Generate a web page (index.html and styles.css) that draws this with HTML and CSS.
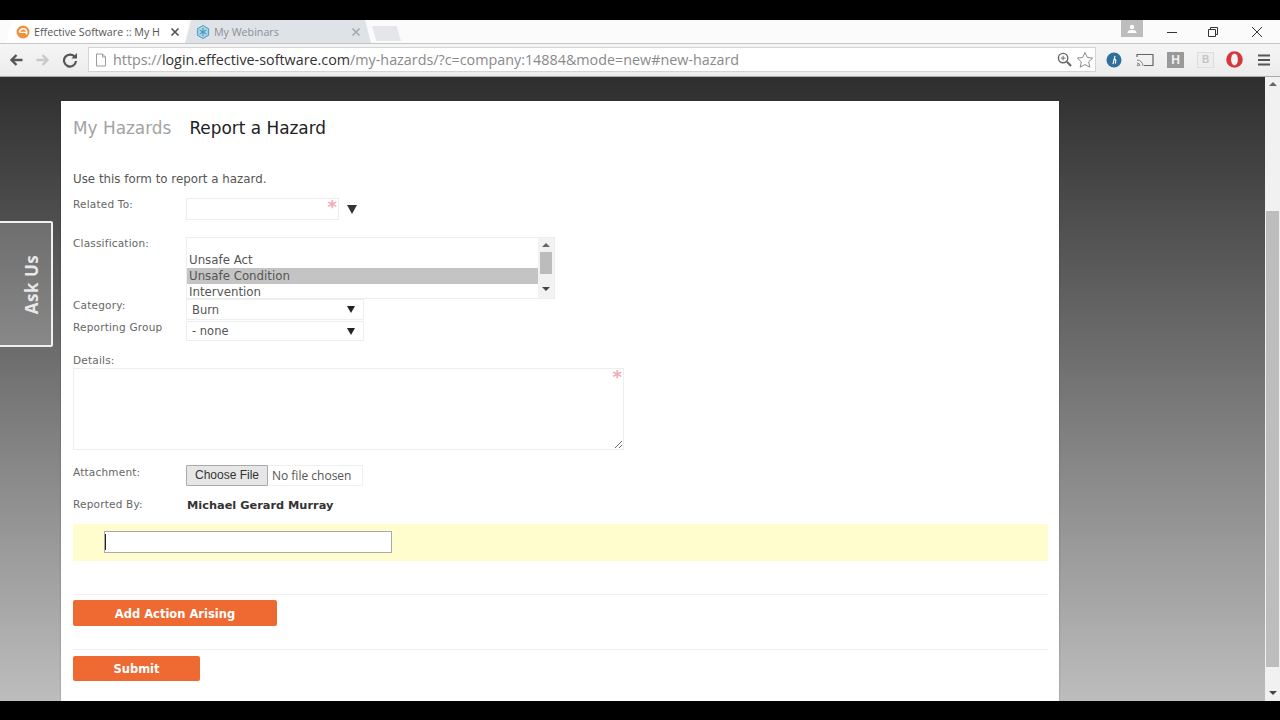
FILE: index.html
```html
<!DOCTYPE html>
<html lang="en">
<head>
<meta charset="utf-8">
<title>Effective Software :: My Hazards</title>
<link rel="stylesheet" href="styles.css">
</head>
<body>
<div class="letterbox-top"></div>
<div class="chrome-tabs">
  <div class="tab tab-active">
    <svg class="favicon" viewBox="0 0 14 14"><circle cx="7" cy="7" r="6.5" fill="#f0913a"/><path d="M3.5 7.5a3.6 3.6 0 1 1 6.6 1.8" fill="none" stroke="#fff" stroke-width="1.6"/><path d="M4 7.4h6" stroke="#fff" stroke-width="1.3"/></svg>
    <span class="tab-title">Effective Software :: My H</span>
    <svg class="tab-close" viewBox="0 0 10 10"><path d="M1.5 1.5l7 7M8.5 1.5l-7 7" stroke="#555" stroke-width="1.7"/></svg>
  </div>
  <div class="tab tab-other">
    <svg class="favicon" viewBox="0 0 14 14"><path d="M7 .5l5.6 3.2v6.6L7 13.5l-5.6-3.2V3.7z" fill="#a9d4e8" stroke="#4b9cc4"/><path d="M7 3v8M3.5 5l7 4M10.5 5l-7 4" stroke="#3d8fb8"/></svg>
    <span class="tab-title">My Webinars</span>
    <svg class="tab-close" viewBox="0 0 10 10"><path d="M1.5 1.5l7 7M8.5 1.5l-7 7" stroke="#a5a8ac" stroke-width="1.6"/></svg>
  </div>
  <div class="tab-new"></div>
  <div class="window-controls">
    <div class="profile"><svg viewBox="0 0 12 10" width="12" height="10"><circle cx="6" cy="3" r="2.2" fill="#fff"/><path d="M1.5 9c0-2.4 2-3 4.5-3s4.500.6 4.500 3z" fill="#fff"/></svg></div>
    <svg class="win-btn win-min" viewBox="0 0 12 12"><path d="M1 6.500h10" stroke="#333" stroke-width="1"/></svg>
    <svg class="win-btn win-max" viewBox="0 0 12 12"><path d="M1.500 3.500h7v7h-7zM3.500 3.500v-2h7v7h-2" fill="none" stroke="#333"/></svg>
    <svg class="win-btn win-close" viewBox="0 0 12 12"><path d="M1 1l10 10M11 1L1 11" stroke="#333" stroke-width="1"/></svg>
  </div>
</div>
<div class="chrome-toolbar">
  <svg class="nav-icon nav-back" viewBox="0 0 16 16"><path d="M14.500 8H4M8.500 3L3.500 8l5 5" fill="none" stroke="#555" stroke-width="2.400"/></svg>
  <svg class="nav-icon nav-forward" viewBox="0 0 16 16"><path d="M1.500 8H12M7.500 3l5 5-5 5" fill="none" stroke="#c9c9c9" stroke-width="2.400"/></svg>
  <svg class="nav-icon nav-reload" viewBox="0 0 16 16"><path d="M13 5.200A6 6 0 1 0 14 9" fill="none" stroke="#555" stroke-width="2.200"/><path d="M9.500 6.500h5.500V1z" fill="#555"/></svg>
  <div class="omnibox">
    <svg class="page-icon" viewBox="0 0 12 14"><path d="M1.500 1h6l3 3v9h-9z M7.500 1v3h3" fill="#fff" stroke="#9a9a9a"/></svg>
    <span class="url"><span class="url-dim">https://</span>login.effective-software.com<span class="url-dim">/my-hazards/?c=company:14884&amp;mode=new#new-hazard</span></span>
    <svg class="zoom-icon" viewBox="0 0 16 16"><circle cx="6.500" cy="6.500" r="5" fill="none" stroke="#666" stroke-width="1.500"/><path d="M10.500 10.500L15 15" stroke="#666" stroke-width="2.200"/><path d="M4 6.500h5M6.500 4v5" stroke="#666"/></svg>
    <svg class="star-icon" viewBox="0 0 18 18"><path d="M9 1.500l2.300 5 5.400.6-4 3.700 1.100 5.400L9 13.500l-4.800 2.700 1.100-5.400-4-3.700 5.400-.6z" fill="#fff" stroke="#8a8a8a"/></svg>
  </div>
  <div class="extensions">
    <svg class="ext ext-h" viewBox="0 0 16 16"><circle cx="8" cy="8" r="7.500" fill="#2f6f9c"/><path d="M9 4L7 12M7.500 8.500c1-1.500 2.500-1.500 2.300.2l-.5 3" fill="none" stroke="#fff" stroke-width="1.100"/></svg>
    <svg class="ext ext-cast" viewBox="0 0 18 14"><path d="M1 4V1.500h16v11H8" fill="none" stroke="#666" stroke-width="1.200"/><path d="M1 7a6 6 0 0 1 6 6M1 10a3 3 0 0 1 3 3" fill="none" stroke="#888"/><circle cx="1.800" cy="12.300" r="1" fill="#888"/></svg>
    <div class="ext ext-square ext-dark">H</div>
    <div class="ext ext-square ext-pale">B</div>
    <svg class="ext ext-opera" viewBox="0 0 16 16"><circle cx="8" cy="8" r="7.800" fill="#d8373a"/><ellipse cx="8" cy="8" rx="3.200" ry="5.600" fill="#f5f5f5"/></svg>
    <svg class="ext ext-menu" viewBox="0 0 12 12"><path d="M0 1.500h12M0 6h12M0 10.500h12" stroke="#555" stroke-width="2.200"/></svg>
  </div>
</div>
<div class="viewport">
  <div class="page">
    <aside class="ask-us"><span class="ask-us-text">Ask Us</span></aside>
    <main class="card">
      <div class="heading">
        <span class="heading-muted">My Hazards</span>
        <span class="heading-current">Report a Hazard</span>
      </div>
      <p class="intro">Use this form to report a hazard.</p>
      <div class="row row-related">
        <label class="label">Related To:</label>
        <div class="box related-box"><span class="req">*</span></div>
        <span class="combo-arrow"></span>
      </div>
      <div class="row row-class">
        <label class="label">Classification:</label>
        <div class="listbox">
          <div class="options">
            <div class="option option-blank"></div>
            <div class="option">Unsafe Act</div>
            <div class="option option-selected">Unsafe Condition</div>
            <div class="option">Intervention</div>
          </div>
          <div class="list-scroll">
            <span class="tri-up"></span>
            <span class="list-thumb"></span>
            <span class="tri-down"></span>
          </div>
        </div>
      </div>
      <div class="row row-category">
        <label class="label">Category:</label>
        <div class="select">Burn<span class="sel-arrow"></span></div>
      </div>
      <div class="row row-group">
        <label class="label">Reporting Group</label>
        <div class="select">- none<span class="sel-arrow"></span></div>
      </div>
      <label class="label label-details">Details:</label>
      <div class="details-wrap">
        <textarea class="details"></textarea>
        <span class="req req-details">*</span>
      </div>
      <div class="row row-attach">
        <label class="label">Attachment:</label>
        <div class="file">
          <span class="file-btn">Choose File</span>
          <span class="file-text">No file chosen</span>
        </div>
      </div>
      <div class="row row-reported">
        <label class="label">Reported By:</label>
        <strong class="reporter">Michael Gerard Murray</strong>
      </div>
      <div class="yellow-band"><div class="focus-input"><span class="caret"></span></div></div>
      <div class="divider divider-one"></div>
      <button class="action action-wide">Add Action Arising</button>
      <div class="divider divider-two"></div>
      <button class="action action-submit">Submit</button>
    </main>
  </div>
  <div class="page-scrollbar">
    <span class="tri-up tri-page-up"></span>
    <span class="page-thumb"></span>
    <span class="tri-down tri-page-down"></span>
  </div>
</div>
<div class="letterbox-bottom"></div>
</body>
</html>
```
FILE: styles.css
```css
* { box-sizing: border-box; }
html, body { margin: 0; height: 720px; overflow: hidden; }
body { display: flex; flex-direction: column; font-family: "DejaVu Sans", sans-serif; background: #000; color: #444; }
.letterbox-top { height: 20px; background: #000; flex: none; }
.letterbox-bottom { height: 19px; background: #000; flex: none; }

.chrome-tabs { height: 24px; flex: none; background: #fbfbfb; display: flex; align-items: stretch; padding-left: 6px; border-bottom: 1px solid #c6c6c6; font-family: "Open Sans", sans-serif; font-size: 10.700px; }
.tab { display: flex; align-items: center; height: 23px; padding-left: 10px; clip-path: polygon(0 100%, 6px 0, calc(100% - 6px) 0, 100% 100%); }
.tab-active { width: 186px; background: #fff; color: #555; }
.tab-other { width: 186px; margin-left: -7px; padding-left: 11px; background: #dfe2e7; color: #8b8f94; }
.favicon { width: 14px; height: 14px; flex: none; margin-right: 4px; }
.tab-title { flex: 1; white-space: nowrap; overflow: hidden; }
.tab-close { width: 10px; height: 10px; flex: none; margin-right: 10px; }
.tab-active .tab-close { margin-right: 12px; }
.tab-new { width: 29px; height: 15px; margin: 6px 0 0 1px; background: #e4e6e9; clip-path: polygon(0 0, 85% 0, 100% 100%, 15% 100%); }
.window-controls { margin-left: auto; display: flex; align-items: flex-start; }
.profile { width: 22px; height: 17px; background: #bdbdbd; display: flex; justify-content: center; align-items: center; margin-right: 23px; }
.win-btn { width: 12px; height: 12px; margin-top: 6px; }
.win-max { margin-left: 29px; }
.win-close { margin-left: 32px; margin-right: 17px; }

.chrome-toolbar { height: 33px; flex: none; display: flex; align-items: center; background: linear-gradient(#f5f5f5, #ececec); border-bottom: 1px solid #aaa; padding-left: 8px; padding-bottom: 1px; }
.nav-icon { width: 16px; height: 16px; flex: none; }
.nav-forward { margin-left: 11px; }
.nav-reload { margin-left: 11px; }
.omnibox { width: 1008px; height: 25px; margin-left: 10px; background: #fff; border: 1px solid #d4d4d4; display: flex; align-items: center; padding-left: 6px; font-family: "Open Sans", sans-serif; font-size: 14.340px; color: #333; }
.page-icon { width: 12px; height: 14px; flex: none; margin-right: 6px; }
.url { flex: 1; white-space: nowrap; }
.url-dim { color: #8a8a8a; }
.zoom-icon { width: 15px; height: 15px; flex: none; }
.star-icon { width: 18px; height: 18px; flex: none; margin: 0 1px 0 4px; }
.extensions { display: flex; align-items: center; margin-left: 10px; }
.ext { flex: none; }
.ext-h { width: 16px; height: 16px; }
.ext-cast { width: 18px; height: 14px; margin-left: 14px; }
.ext-square { width: 17px; height: 16px; margin-left: 13px; display: flex; align-items: center; justify-content: center; font: bold 12px "Liberation Sans", sans-serif; }
.ext-dark { background: #999; color: #f0f0f0; }
.ext-pale { background: #eee; color: #c4c4c4; border: 1px solid #ddd; margin-left: 13px; font-size: 10px; }
.ext-opera { width: 17px; height: 17px; margin-left: 12px; }
.ext-menu { width: 12px; height: 12px; margin-left: 15px; }

.viewport { height: 624px; flex: none; display: flex; overflow: hidden; }
.page { position: relative; width: 1265px; background: linear-gradient(#2e2e2e, #bdbdbd); padding: 24px 0 0 61px; overflow: hidden; }
.page-scrollbar { width: 15px; background: #f1f1f1; display: flex; flex-direction: column; align-items: center; padding-top: 5px; position: relative; }
.tri-up { width: 0; height: 0; border-left: 4px solid transparent; border-right: 4px solid transparent; border-bottom: 4px solid #666; }
.tri-down { width: 0; height: 0; border-left: 4px solid transparent; border-right: 4px solid transparent; border-top: 4px solid #444; }
.page-thumb { width: 13px; height: 456px; margin-top: 125px; background: #bdbdbd; }
.tri-page-down { margin-top: 24px; }

.ask-us { position: absolute; left: -3px; top: 144px; width: 56px; height: 126px; background: linear-gradient(#6e6e6e, #888); border: 2px solid #f1f1f1; border-radius: 0 2px 2px 0; display: flex; align-items: center; justify-content: center; }
.ask-us-text { transform: rotate(-90deg); white-space: nowrap; font: bold 17px "Open Sans", sans-serif; color: #e8e8e8; letter-spacing: .5px; margin-left: 14px; }

.card { width: 998px; height: 600px; background: #fff; padding: 0 11px 0 12px; box-shadow: 0 0 2px rgba(0,0,0,.25); }
.heading { display: flex; gap: 18px; padding-top: 14px; height: 54px; font-size: 16.900px; line-height: 26px; }
.heading-muted { color: #a3a3a3; }
.heading-current { color: #222; }
.intro { margin: 16px 0 0; font-size: 11.850px; line-height: 16px; color: #555; }

.row { display: flex; align-items: flex-start; }
.label { display: block; width: 113px; flex: none; font-size: 10.500px; line-height: 14px; color: #666; letter-spacing: .2px; }
.row-related { margin-top: 11px; height: 22px; }
.row-related .label { margin-top: -1px; }
.box { border: 1px solid #eee; }
.related-box { width: 153px; height: 22px; position: relative; background: #fff; }
.req { position: absolute; right: 1px; top: 0; font: bold 18px/16px "DejaVu Sans", sans-serif; color: #f2a9b6; }
.combo-arrow { width: 0; height: 0; margin: 7px 0 0 8px; border-left: 5.500px solid transparent; border-right: 5.500px solid transparent; border-top: 9px solid #333; }
.row-class { margin-top: 17px; height: 62px; }
.row-class .label { margin-top: -1px; }
.listbox { width: 369px; height: 62px; border: 1px solid #eee; display: flex; overflow: hidden; }
.options { flex: 1; font-size: 11.800px; line-height: 16px; color: #555; margin-top: -2px; }
.option { padding-left: 2px; height: 16px; white-space: nowrap; }
.option-selected { background: #c4c4c4; }
.list-scroll { width: 16px; background: #f2f2f2; display: flex; flex-direction: column; align-items: center; padding-top: 5px; }
.list-thumb { width: 12px; height: 22px; margin-top: 5px; background: #bcbcbc; }
.list-scroll .tri-down { margin-top: 13px; }
.row-category { height: 22px; }
.row-category .label { margin-top: -1px; }
.row-group { height: 20px; }
.select { width: 178px; height: 21px; border: 1px solid #eee; background: #fff; display: flex; align-items: center; justify-content: space-between; padding: 0 8px 0 5px; font-size: 11.500px; color: #555; }
.row-group .select { height: 20px; }
.row-group .label { margin-top: -1px; }
.sel-arrow { width: 0; height: 0; border-left: 4px solid transparent; border-right: 4px solid transparent; border-top: 7px solid #222; }
.label-details { margin-top: 12px; width: auto; }
.details-wrap { position: relative; margin-top: 1px; width: 551px; height: 82px; }
.details { display: block; width: 551px; height: 82px; border: 1px solid #eee; background: #fff; outline: none; }
.req-details { right: 2px; top: 1px; }
.row-attach { margin-top: 15px; height: 21px; }
.file { width: 177px; height: 21px; display: flex; align-items: center; border: 1px solid #f0f0f0; border-left: 0; font-family: "Liberation Sans", sans-serif; font-size: 12px; }
.file-btn { width: 82px; height: 21px; line-height: 19px; text-align: center; background: #e6e6e6; border: 1px solid #aaa; border-radius: 1px; color: #333; }
.file-text { margin-left: 4px; font-family: "Open Sans", sans-serif; color: #555; font-size: 12px; }
.row-reported { margin-top: 11px; height: 17px; }
.reporter { font-size: 11.350px; line-height: 16px; font-weight: bold; color: #333; margin-left: 1px; }
.yellow-band { margin-top: 10px; height: 37px; background: #fffccd; padding: 7px 0 0 31px; }
.focus-input { width: 288px; height: 22px; background: #fff; border: 1px solid #aaa; padding: 2px 0 0 0; }
.caret { display: block; width: 1px; height: 16px; background: #222; }
.divider { height: 1px; background: #f0f0f0; }
.divider-one { margin-top: 33px; }
.divider-two { margin-top: 23px; }
.action { display: block; background: #ee6a32; color: #fff; border: 0; border-radius: 2px; font: bold 11.500px "DejaVu Sans", sans-serif; padding: 0; }
.action-wide { width: 204px; height: 26px; margin-top: 5px; padding-top: 2px; }
.action-submit { width: 127px; height: 25px; margin-top: 6px; }
```
